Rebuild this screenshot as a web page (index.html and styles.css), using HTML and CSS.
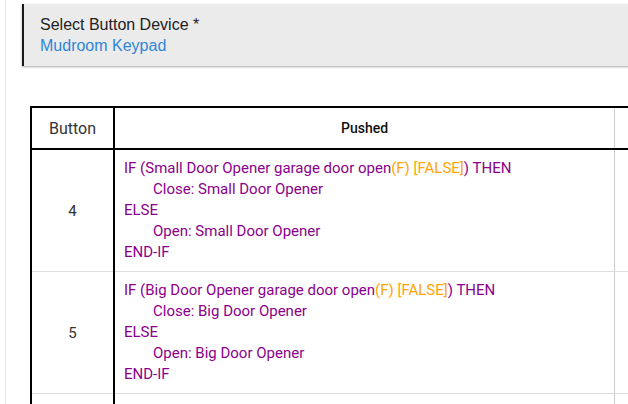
FILE: index.html
```html
<!DOCTYPE html>
<html lang="en">
<head>
  <meta charset="UTF-8">
  <title>Button Rule</title>
  <link rel="stylesheet" href="styles.css">
</head>
<body>

<div class="page">
  <div class="device-select">
    <div class="device-label">Select Button Device *</div>
    <div class="device-value">Mudroom Keypad</div>
  </div>

  <table class="rule-table">
    <thead>
      <tr>
        <th class="col-button">Button</th>
        <th class="col-pushed">Pushed</th>
        <th class="col-next"></th>
      </tr>
    </thead>
    <tbody>
      <tr>
        <td class="btn-num">4</td>
        <td class="actions">
          <div>IF (Small Door Opener garage door open<span class="truth">(F) [FALSE]</span>) THEN</div>
          <div class="indent">Close: Small Door Opener</div>
          <div>ELSE</div>
          <div class="indent">Open: Small Door Opener</div>
          <div>END-IF</div>
        </td>
        <td></td>
      </tr>
      <tr>
        <td class="btn-num">5</td>
        <td class="actions">
          <div>IF (Big Door Opener garage door open<span class="truth">(F) [FALSE]</span>) THEN</div>
          <div class="indent">Close: Big Door Opener</div>
          <div>ELSE</div>
          <div class="indent">Open: Big Door Opener</div>
          <div>END-IF</div>
        </td>
        <td></td>
      </tr>
      <tr>
        <td class="btn-num"></td>
        <td class="actions"><div>&nbsp;</div></td>
        <td></td>
      </tr>
    </tbody>
  </table>
</div>

</body>
</html>
```

FILE: styles.css
```css
body {
  margin: 0;
  font-family: Roboto, "Liberation Sans", sans-serif;
  background: #fff;
  overflow: hidden;
}

.page {
  width: 800px;
  height: 404px;
  margin-left: 5px;
  border-left: 1px solid #e6e6e6;
  padding: 4px 0 0 16px;
  overflow: hidden;
}

.device-select {
  background: #ebebeb;
  border-left: 2px solid #1a1a1a;
  padding: 10px 16px;
  box-shadow: 0 1px 2px rgba(0,0,0,0.35);
  font-family: "Liberation Sans", Arial, sans-serif;
  font-size: 16px;
  line-height: 21px;
}

.device-label {
  color: #222;
}

.device-value {
  color: #2f86d8;
}

.rule-table {
  margin: 40px 0 0 8px;
  border-collapse: collapse;
  table-layout: fixed;
  width: 760px;
  font-size: 15px;
}

.rule-table th {
  height: 40px;
  padding: 0;
  border-top: 2px solid #000;
  border-bottom: 2px solid #000;
}

.col-button {
  width: 81px;
  font-size: 16px;
  font-weight: normal;
  color: #333;
}

.col-pushed {
  width: 499px;
  font-size: 14px;
  font-weight: 500;
  color: #111;
}

.rule-table td {
  padding: 8px 9px;
  border-bottom: 1px solid #ddd;
  vertical-align: middle;
}

.rule-table tr > :first-child {
  border-left: 2px solid #000;
  border-right: 2px solid #000;
}

.rule-table tr > :nth-child(2) {
  border-right: 1px solid #ccc;
}

.btn-num {
  text-align: center;
  color: #333;
}

.actions {
  color: #8b008b;
  line-height: 21px;
}

.indent {
  padding-left: 29px;
}

.truth {
  color: #ffa500;
}
```
